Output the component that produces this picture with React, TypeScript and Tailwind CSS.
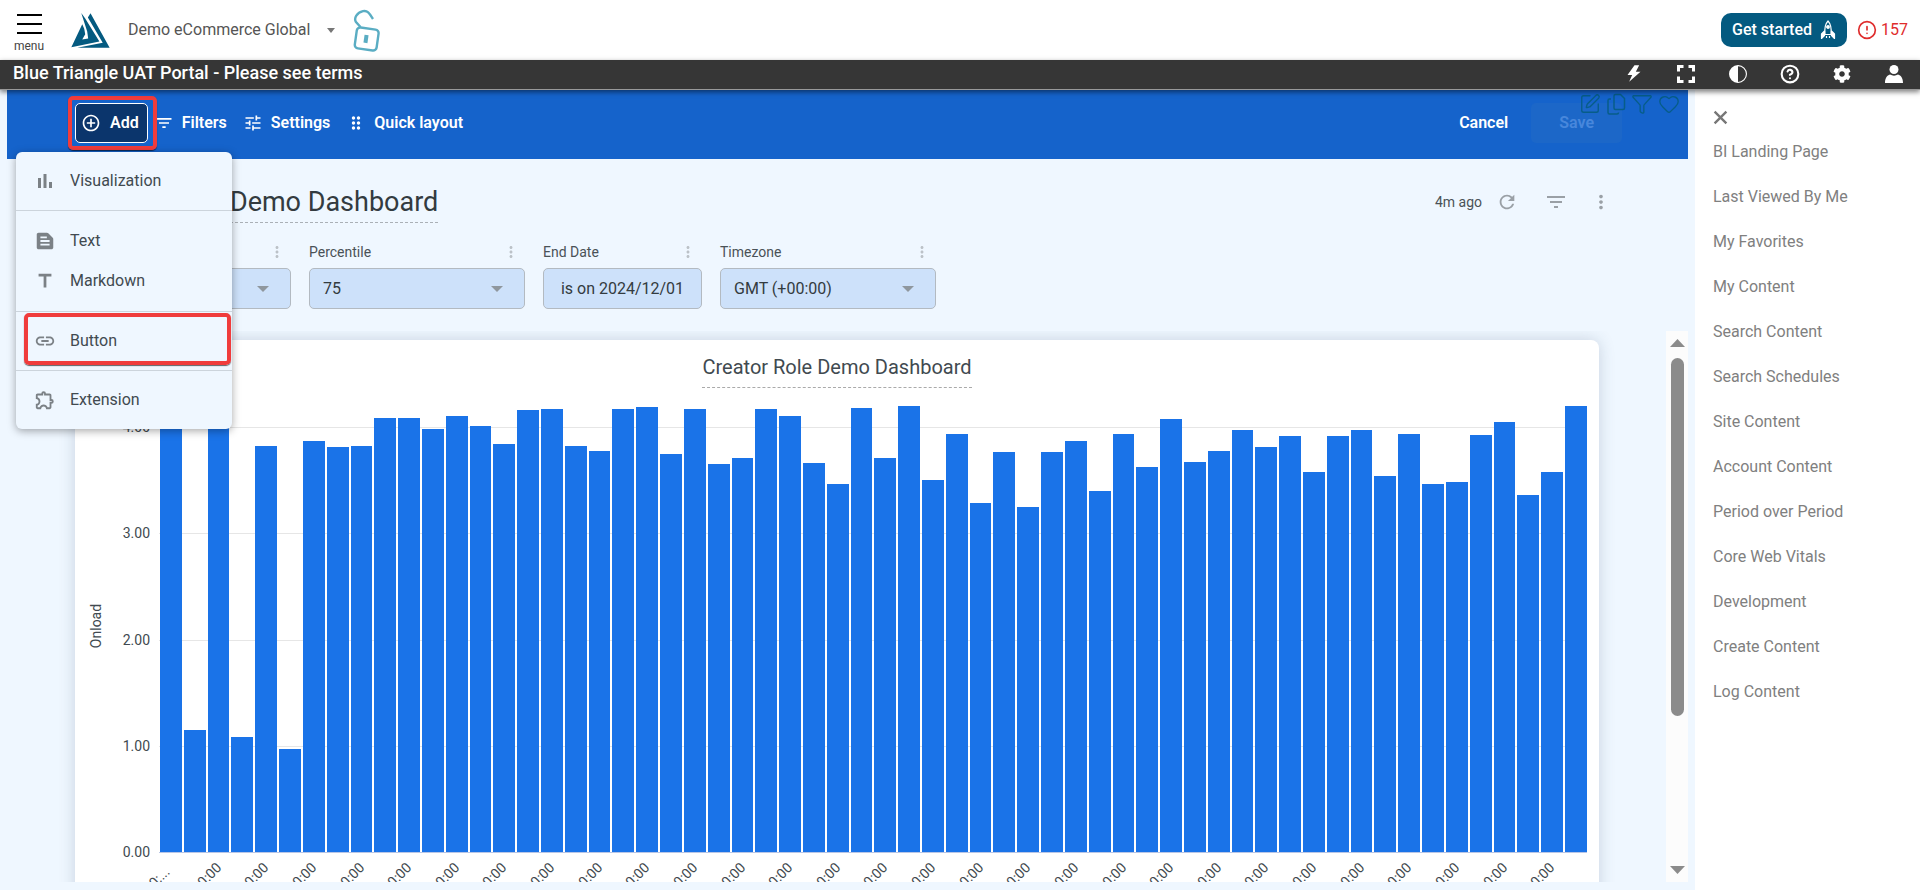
import React from 'react';
import { MdAddCircleOutline, MdFilterList, MdTune, MdDragIndicator, MdTextSnippet, MdTitle, MdLink, MdOutlineExtension, MdRefresh, MdMoreVert } from 'react-icons/md';
import { BsCircleHalf } from 'react-icons/bs';
import { FaCog } from 'react-icons/fa';
import { CircleAlert, CircleQuestionMark, SquarePen, Funnel, Heart } from 'lucide-react';

const sideLinks = [
  'BI Landing Page',
  'Last Viewed By Me',
  'My Favorites',
  'My Content',
  'Search Content',
  'Search Schedules',
  'Site Content',
  'Account Content',
  'Period over Period',
  'Core Web Vitals',
  'Development',
  'Create Content',
  'Log Content',
];

const onload = [
  4.05, 1.15, 4.0, 1.08, 3.82, 0.97, 3.87, 3.81, 3.82, 4.09, 4.09, 3.98, 4.11, 4.01, 3.84,
  4.16, 4.17, 3.82, 3.78, 4.17, 4.19, 3.75, 4.17, 3.65, 3.71, 4.17, 4.11, 3.66, 3.47, 4.18,
  3.71, 4.2, 3.5, 3.94, 3.29, 3.77, 3.25, 3.77, 3.87, 3.4, 3.94, 3.63, 4.08, 3.67, 3.78,
  3.97, 3.81, 3.92, 3.58, 3.92, 3.97, 3.54, 3.94, 3.47, 3.48, 3.93, 4.05, 3.36, 3.58, 4.2,
];

const ticks = [0, 1, 2, 3, 4];
const MAX = 4.2;

function Logo() {
  return (
    <svg viewBox="0 0 116 106" className="h-[35px] w-[39px]" fill="#045a80">
      <path d="M0 104 L33 34 L39 48 L42 64 L33 80 L51 77 L48 56 L30 0 L42 17 L85 86 Z" />
      <path d="M50 14 L58 1 L116 105 L18 105 L95 90 Z" />
    </svg>
  );
}

function UnlockIcon() {
  return (
    <svg viewBox="0 0 27 43" className="h-[43px] w-[27px]" fill="none" stroke="#5aadc3" strokeWidth="2.400">
      <path d="M7.500 18 L3 13 C.5 9 4 3.500 10 2.200 C15 1.200 16.500 4.500 20 10" />
      <g transform="rotate(8 13.700 30)">
        <rect x="2.700" y="19.500" width="22" height="21" rx="3.500" />
        <path d="M13 26v8" strokeWidth="4" />
      </g>
    </svg>
  );
}

function RocketIcon() {
  return (
    <svg viewBox="0 0 16 20" className="h-5 w-4" fill="none" stroke="white" strokeWidth="1.200" strokeLinejoin="round">
      <path d="M8 1C5.200 4 4.300 8 5 14.500h6C11.700 8 10.800 4 8 1Z" />
      <path d="M4.500 11 1.500 14v4.500l3-3zM11.500 11l3 3v4.500l-3-3z" fill="white" />
      <circle cx="8" cy="7" r="1.300" fill="white" />
      <path d="M6.500 16v2M9.500 16v2" />
    </svg>
  );
}

function Dots({ className }: { className: string }) {
  return <MdMoreVert className={className} />;
}

function Header() {
  return (
    <header className="flex h-15 shrink-0 items-center bg-white pr-3 pl-[15px]">
      <button className="flex w-7 flex-col items-center pt-2 text-xs leading-4 text-[#444]">
        <svg viewBox="0 0 26 20" className="h-5 w-[26px]" stroke="black" strokeWidth="2">
          <path d="M1 1h25M1 10h25M1 19h25" />
        </svg>
        <span className="mt-1">menu</span>
      </button>
      <a href="#" aria-label="Home" className="ml-7">
        <Logo />
      </a>
      <button className="ml-[18px] flex items-center gap-[17px] text-base text-[#555]">
        Demo eCommerce Global
        <svg viewBox="0 0 8 5" className="h-[5px] w-2 fill-[#777]">
          <path d="M0 0h8L4 5z" />
        </svg>
      </button>
      <button aria-label="Unlock" className="ml-[18px]">
        <UnlockIcon />
      </button>
      <button className="ml-auto flex h-[34px] items-center gap-2 rounded-[10px] bg-[#045a80] px-[11px] text-base font-medium text-white">
        Get started
        <RocketIcon />
      </button>
      <button className="ml-[10px] flex items-center gap-1 text-base text-[#df2c2c]">
        <CircleAlert size={20} strokeWidth={2} />
        157
      </button>
    </header>
  );
}

function PortalBar() {
  return (
    <div className="relative z-30 flex h-[30px] shrink-0 items-center border-b border-[#999] bg-[#363636] pr-4 pb-0.5 pl-[13px] text-white shadow-[0_2px_5px_rgba(0,0,0,0.5)]">
      <h2 className="pb-0.5 text-lg leading-6 font-medium">Blue Triangle UAT Portal - Please see terms</h2>
      <div className="ml-auto flex gap-8">
        <button aria-label="Quick actions" className="grid w-5 place-items-center">
          <svg viewBox="0 0 41 51" className="h-[17px] w-[14px]" fill="white">
            <path d="M22 1 L1 30 H15 L6 50 L40 20 H26 L36 1 Z" />
          </svg>
        </button>
        <button aria-label="Full screen" className="grid w-5 place-items-center">
          <svg viewBox="0 0 18 18" className="size-[18px]" fill="none" stroke="white" strokeWidth="3">
            <path d="M1.500 6.500v-5h5M11.500 1.500h5v5M16.500 11.500v5h-5M6.500 16.500h-5v-5" />
          </svg>
        </button>
        <button aria-label="Contrast" className="grid w-5 place-items-center">
          <BsCircleHalf size={18} />
        </button>
        <button aria-label="Help" className="grid w-5 place-items-center">
          <CircleQuestionMark size={20} strokeWidth={2.5} />
        </button>
        <button aria-label="Options" className="grid w-5 place-items-center">
          <FaCog size={18} />
        </button>
        <button aria-label="Account" className="grid w-5 place-items-center">
          <svg viewBox="0 0 18 18" className="size-[18px]" fill="white">
            <circle cx="9" cy="4.500" r="4.500" />
            <path d="M0 18c0-5 2-7.500 5-8.500 2.500 1.500 5.500 1.500 8 0 3 1 5 3.500 5 8.500z" />
          </svg>
        </button>
      </div>
    </div>
  );
}

function MenuItem({ icon, label }: { icon: React.ReactNode; label: string }) {
  return (
    <button role="menuitem" className="flex h-10 w-full items-center gap-[13px] pl-[17px] text-base text-[#414a50]">
      <span className="grid w-6 place-items-center text-[#7b8186]">{icon}</span>
      {label}
    </button>
  );
}

function AddMenu() {
  return (
    <div role="menu" className="absolute top-[62px] left-[9px] z-20 w-[216px] divide-y divide-[#ccd4dc] rounded-md bg-[#eff7ff] font-normal shadow-[0_2px_8px_rgba(0,0,0,0.35)]">
      <div className="py-[9px]">
        <MenuItem
          label="Visualization"
          icon={
            <svg viewBox="0 0 14 14" className="size-[14px]" fill="currentColor">
              <path d="M0 4h3v10H0zM5.500 0h3v14h-3zM11 8h3v6h-3z" />
            </svg>
          }
        />
      </div>
      <div className="py-[10px]">
        <MenuItem label="Text" icon={<MdTextSnippet size={22} />} />
        <MenuItem label="Markdown" icon={<MdTitle size={22} />} />
      </div>
      <div className="py-[9px]">
        <div className="relative">
          <MenuItem label="Button" icon={<MdLink size={22} />} />
          <span className="pointer-events-none absolute -top-2 right-px -bottom-1 left-2 rounded-[5px] border-4 border-[#f03c3c] shadow-[0_1px_1px_rgba(0,0,0,0.6)]" />
        </div>
      </div>
      <div className="py-[9px]">
        <MenuItem label="Extension" icon={<MdOutlineExtension size={22} />} />
      </div>
    </div>
  );
}

function Toolbar() {
  return (
    <div className="relative flex h-[69px] shrink-0 items-center bg-[#1563cb] pr-[66px] pb-[3px] pl-[68px] text-base font-semibold text-white">
      <div className="relative z-10">
        <button className="flex h-10 items-center gap-[9px] rounded-[5px] border border-white bg-[#0b356c] pr-2 pl-[5px]">
          <MdAddCircleOutline size={20} />
          Add
        </button>
        <span className="pointer-events-none absolute -inset-[7px] -right-[9px] rounded-[5px] border-4 border-[#f03c3c] shadow-[0_1px_1px_rgba(0,0,0,0.6)]" />
      </div>
      <button className="ml-1.5 flex items-center gap-2">
        <MdFilterList size={20} />
        Filters
      </button>
      <button className="ml-4 flex items-center gap-2">
        <MdTune size={20} />
        Settings
      </button>
      <button className="ml-4 flex items-center gap-2">
        <MdDragIndicator size={20} />
        Quick layout
      </button>
      <button className="ml-auto">Cancel</button>
      <button disabled className="ml-[23px] h-10 rounded-[5px] bg-[#1c67c8] px-7 text-[#4887dc]">Save</button>
      <div className="absolute top-[3px] right-[8px] flex gap-[5px] text-[#075d88]">
        <SquarePen size={22} strokeWidth={1.5} />
        <svg viewBox="0 0 20 22" className="h-[22px] w-5" fill="none" stroke="currentColor" strokeWidth="1.500" strokeLinejoin="round">
          <path d="M9.500 1.500h5l4 4v9.500q0 1.500-1.500 1.500H9.500Q8 16.500 8 15V3q0-1.500 1.500-1.500z" />
          <path d="M5 6H3.500Q2 6 2 7.500v12Q2 21 3.500 21H11q1.500 0 1.500-1.500" />
        </svg>
        <Funnel size={22} strokeWidth={1.5} />
        <Heart size={22} strokeWidth={1.5} />
      </div>
      <AddMenu />
    </div>
  );
}

function FilterSelect({ id, label, value }: { id: string; label: string; value: string }) {
  return (
    <div className="w-[216px]">
      <div className="flex h-6 items-center justify-between">
        <label htmlFor={id} className="text-sm text-[#4a5257]">{label}</label>
        <Dots className="-mr-0.5 size-[18px] w-8 text-[#bcc2c8]" />
      </div>
      <div className="relative mt-1">
        <select id={id} className="h-[41px] w-full appearance-none rounded-[5px] border border-[#b3bac1] bg-[#cde1fa] px-[13px] text-base text-[#333b40]">
          <option>{value}</option>
        </select>
        <svg viewBox="0 0 12 6" className="pointer-events-none absolute top-[18px] right-[22px] h-1.5 w-3 fill-[#8f979e]">
          <path d="M0 0h12L6 6z" />
        </svg>
      </div>
    </div>
  );
}

function Chart() {
  return (
    <section className="h-[640px] rounded-lg bg-white pr-3 shadow-[0_0_16px_rgba(60,80,110,0.22)]">
      <div className="flex h-[66px] items-start justify-center pt-[13px] pl-3">
        <h2 className="border-b border-dashed border-[#aaa] pb-1.5 text-xl text-[#414a50]">Creator Role Demo Dashboard</h2>
      </div>
      <div className="flex text-sm text-[#414a50]">
        <div className="flex h-[447px] w-[42px] items-center justify-center pb-2">
          <span className="-rotate-90">Onload</span>
        </div>
        <div className="relative h-[446px] w-[42px]">
          {ticks.map((t) => (
            <span key={t} className="absolute right-[9px] translate-y-1/2 leading-5" style={{ bottom: `${(t / MAX) * 100}%` }}>
              {t.toFixed(2)}
            </span>
          ))}
        </div>
        <div className="min-w-0 flex-1">
          <div className="relative h-[447px] border-b border-[#b9c6e6]">
            {ticks.slice(1).map((t) => (
              <div key={t} className="absolute inset-x-0 h-px translate-y-px bg-[#e6e6e6]" style={{ bottom: `${(t / MAX) * 100}%` }} />
            ))}
            <div className="relative flex h-full items-end gap-0.5 pl-px">
              {onload.map((v, i) => (
                <div key={i} className="flex-1 bg-[#1a73e8]" style={{ height: `${(v / MAX) * 100}%` }} />
              ))}
            </div>
          </div>
          <div className="flex gap-0.5 pl-px">
            {onload.map((_, i) => (
              <div key={i} className="relative h-16 flex-1">
                {i % 2 === 0 && (
                  <span className={`absolute top-0.5 right-1/2 origin-right -rotate-45 leading-5 whitespace-nowrap ${i === 0 ? 'pr-1.5' : ''}`}>
                    {i === 0 ? '00:...' : '00:00'}
                  </span>
                )}
              </div>
            ))}
          </div>
        </div>
      </div>
    </section>
  );
}

function ScrollTrack() {
  return (
    <div className="flex w-[22px] shrink-0 flex-col items-center bg-[#fcfcfc] py-2">
      <svg viewBox="0 0 15 8" className="h-2 w-[15px] shrink-0 fill-[#8b8b8b]">
        <path d="M0 8h15L7.500 0z" />
      </svg>
      <div className="mt-[11px] h-[358px] w-[13px] rounded-full bg-[#8b8b8b]" />
      <svg viewBox="0 0 15 8" className="mt-auto h-2 w-[15px] shrink-0 fill-[#8b8b8b]">
        <path d="M0 0h15L7.500 8z" />
      </svg>
    </div>
  );
}

function Dashboard() {
  return (
    <main className="flex min-w-0 flex-1 flex-col px-[7px] pb-2">
      <Toolbar />
      <div className="flex h-[81px] shrink-0 items-start pt-[25px] pr-[76px] pl-[68px]">
        <h1 className="border-b border-dashed border-[#aab0b6] pb-0.5 text-[27px] leading-9 text-[#333b40]">Creator Role Demo Dashboard</h1>
        <div className="ml-auto flex h-9 items-center text-[#9aa0a6]">
          <span className="text-sm text-[#4a5257]">4m ago</span>
          <button aria-label="Refresh" className="ml-[14px]"><MdRefresh size={22} /></button>
          <button aria-label="Toggle filters" className="ml-[26px]"><MdFilterList size={24} /></button>
          <button aria-label="More" className="ml-[22px]"><Dots className="size-[22px]" /></button>
        </div>
      </div>
      <div className="flex h-[91px] shrink-0 items-start gap-[18px] pl-[68px]">
        <FilterSelect id="page" label="Page Name" value="is any value" />
        <FilterSelect id="percentile" label="Percentile" value="75" />
        <div className="w-[159px]">
          <div className="flex h-6 items-center justify-between">
            <span className="text-sm text-[#4a5257]">End Date</span>
            <Dots className="-mr-0.5 size-[18px] w-8 text-[#bcc2c8]" />
          </div>
          <button className="mt-1 h-[41px] w-full rounded-[5px] border border-[#b3bac1] bg-[#cde1fa] text-base text-[#333b40]">
            is on 2024/12/01
          </button>
        </div>
        <FilterSelect id="timezone" label="Timezone" value="GMT (+00:00)" />
      </div>
      <div className="flex min-h-0 flex-1 overflow-hidden">
        <div className="min-w-0 flex-1 overflow-hidden pt-[9px] pr-[67px] pl-[68px]">
          <Chart />
        </div>
        <ScrollTrack />
      </div>
    </main>
  );
}

function Sidebar() {
  return (
    <aside className="w-[225px] shrink-0 bg-white pt-[20px] pl-[18px]">
      <button aria-label="Close" className="block">
        <svg viewBox="0 0 14 14" className="size-[15px]" fill="none" stroke="#777" strokeWidth="2.200">
          <path d="M1.500 1.500l11 11M12.500 1.500l-11 11" />
        </svg>
      </button>
      <nav className="mt-1 flex flex-col text-base text-[#808080]">
        {sideLinks.map((link) => (
          <a key={link} href="#" className="flex h-[45px] items-center">
            {link}
          </a>
        ))}
      </nav>
    </aside>
  );
}

export default function App() {
  return (
    <div className="flex h-screen flex-col overflow-hidden bg-[#eff7ff] font-['Roboto',sans-serif]">
      <Header />
      <PortalBar />
      <div className="flex min-h-0 flex-1">
        <Dashboard />
        <Sidebar />
      </div>
    </div>
  );
}
